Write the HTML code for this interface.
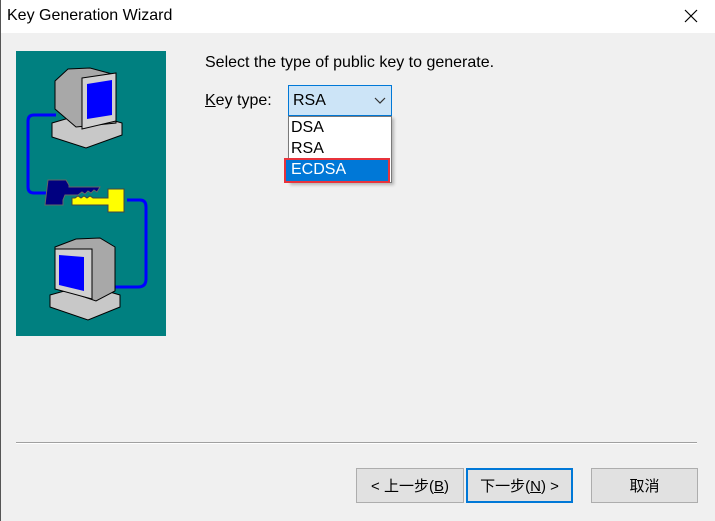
<!DOCTYPE html>
<html><head><meta charset="utf-8"><style>
body{margin:0;width:715px;height:521px;background:#f0f0f0;font-family:"Segoe UI","Liberation Sans","Noto Sans CJK SC",sans-serif;position:relative;overflow:hidden;font-size:16px;color:#000}
.abs{position:absolute}
.btn{position:absolute;top:468px;height:35px;background:#e1e1e1;border:1px solid #adadad;box-sizing:border-box;text-align:center;line-height:35px;font-size:15px}
</style></head><body>
<div class="abs" style="left:0;top:0;width:715px;height:33px;background:#fff"></div>
<div class="abs" style="left:0;top:0;width:1px;height:521px;background:#555"></div>
<div class="abs" style="left:7px;top:7px;font-size:16px">Key Generation Wizard</div>
<svg class="abs" style="left:684px;top:9px" width="14" height="14"><path d="M1 1L13 13M13 1L1 13" stroke="#000" stroke-width="1.2"/></svg>
<svg class="abs" style="left:16px;top:51px" width="150" height="285">
<rect width="150" height="285" fill="#008080"/>
<path d="M40 64 H18 Q12 64 12 70 V136 Q12 142 18 142 H32" stroke="#0000ff" stroke-width="3" fill="none"/>
<path d="M111 149 H124 Q130 149 130 156 V228 Q130 236 122 236 H98" stroke="#0000ff" stroke-width="3" fill="none"/>
<polygon points="36,72 70,62 106,72 106,84 70,97 36,86" fill="#c8c8c8" stroke="#000"/>
<polygon points="39,30 52,18 74,17 100,24 100,72 60,76 39,58" fill="#a8a8a8" stroke="#000"/>
<polygon points="66,27 100,22 100,70 66,78" fill="#d0d0d0" stroke="#000"/>
<polygon points="71,33 96,29 96,64 71,68" fill="#0000ff"/>
<path d="M32 129 h18 l3 5 v2 h31 l-3 5 l-3 -2 l-3 3 l-3 -2 l-3 3 l-3-2 l-4 3 h-13 l-2 5 v5 h-18 z" fill="#000080" stroke="#666"/>
<path d="M56 147 h3 l3 -2 l3 2 l3 -2 l3 2 l3-2 l3 2 h15 v-9 h16 v23 h-16 v-7 h-36 z" fill="#ffff00" stroke="#444"/>
<polygon points="34,244 70,234 104,244 104,256 72,269 34,256" fill="#c8c8c8" stroke="#000"/>
<polygon points="39,196 60,188 84,187 99,196 99,240 80,250 39,236" fill="#a8a8a8" stroke="#000"/>
<polygon points="39,198 76,198 76,248 39,238" fill="#d0d0d0" stroke="#000"/>
<polygon points="43,204 68,206 68,240 43,234" fill="#0000ff"/>
</svg>
<div class="abs" style="left:205px;top:54px">Select the type of public key to generate.</div>
<div class="abs" style="left:205px;top:92px"><u>K</u>ey type:</div>
<div class="abs" style="left:288px;top:85px;width:104px;height:31px;box-sizing:border-box;background:#cce4f7;border:1px solid #0078d7"></div>
<div class="abs" style="left:293px;top:92px">RSA</div>
<svg class="abs" style="left:374px;top:97px" width="12" height="8"><path d="M1 1 L6 6 L11 1" stroke="#333" fill="none" stroke-width="1.2"/></svg>
<div class="abs" style="left:288px;top:116px;width:104px;height:67px;box-sizing:border-box;background:#fff;border:1px solid #7a7a7a;box-shadow:2px 2px 3px rgba(0,0,0,.25)"></div>
<div class="abs" style="left:291px;top:119px">DSA</div>
<div class="abs" style="left:291px;top:140px">RSA</div>
<div class="abs" style="left:284px;top:158px;width:106px;height:25px;box-sizing:border-box;background:#0078d7;border:2px solid #e8333b"></div>
<div class="abs" style="left:291px;top:161px;color:#fff">ECDSA</div>
<div class="abs" style="left:16px;top:442px;width:681px;height:1px;background:#a0a0a0"></div>
<div class="abs" style="left:16px;top:443px;width:681px;height:1px;background:#fff"></div>
<div class="btn" style="left:356px;width:108px">&lt; 上一步(<u>B</u>)</div>
<div class="btn" style="left:466px;width:107px;border:2px solid #0078d7;line-height:33px">下一步(<u>N</u>) &gt;</div>
<div class="btn" style="left:591px;width:107px">取消</div>
</body></html>
